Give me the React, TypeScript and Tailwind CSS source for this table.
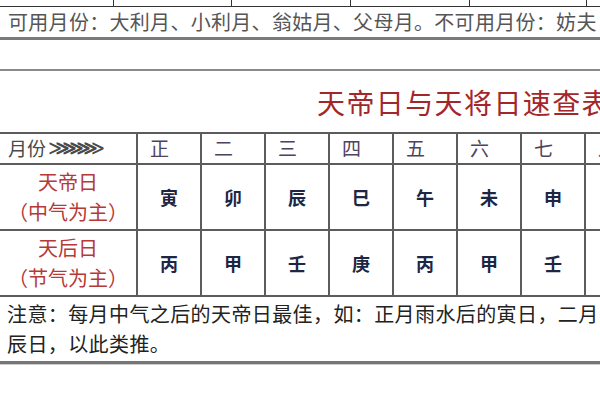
const font = { fontFamily: '"Noto Sans CJK SC", "Noto Sans", sans-serif' };

const months = ['正', '二', '三', '四', '五', '六', '七', '八'];
const tiandi = ['寅', '卯', '辰', '巳', '午', '未', '申', '酉'];
const tianhou = ['丙', '甲', '壬', '庚', '丙', '甲', '壬', '庚'];

function ValueRow({ title, sub, values }: { title: string; sub: string; values: string[] }) {
  return (
    <>
      <div className="h-[66px] flex flex-col items-center justify-center border-r-2 border-b-2 border-[#5c5c5c] text-[20px] leading-[30px] text-[#b53a37]">
        <span>{title}</span>
        <span>（{sub}）</span>
      </div>
      {values.map((v, i) => (
        <div
          key={i}
          className="h-[66px] flex items-center justify-center border-r-2 border-b-2 border-[#5c5c5c] text-[18px] font-bold text-[#1d2642]"
        >
          {v}
        </div>
      ))}
    </>
  );
}

export default function App() {
  return (
    <div className="w-[600px] h-[400px] overflow-hidden bg-white" style={font}>
      {/* cut-off row from the table above */}
      <div className="grid grid-cols-[114px_118px_119px_119px_117px_13px] h-[7px] border-b-[1.5px] border-[#333]">
        {[0, 1, 2, 3, 4, 5].map((i) => (
          <div key={i} className={i < 5 ? 'border-r-[1.5px] border-[#333]' : ''} />
        ))}
      </div>

      <div className="h-[30px] flex items-center pl-[8px] whitespace-nowrap text-[20px] tracking-[0.3px] text-[#555]">
        可用月份：大利月、小利月、翁姑月、父母月。不可用月份：妨夫
      </div>

      <div className="h-[3px] bg-[#7a7a7a]" />
      <div className="h-[29px]" />
      <div className="h-[2px] bg-[#8a8a8a]" />

      <div className="h-[61px] flex items-center pl-[317px] whitespace-nowrap text-[28px] tracking-[1.4px] text-[#a3262b]">
        天帝日与天将日速查表
      </div>

      <div className="border-t-2 border-[#5c5c5c] grid grid-cols-[138px_repeat(8,64px)] w-[650px]">
        <div className="h-[31px] flex items-center pl-[8px] border-r-2 border-b-2 border-[#5c5c5c] text-[19px] text-[#4a4a4a] whitespace-nowrap overflow-hidden">
          月份
          <span className="ml-[2px] text-[21px] tracking-[-15px] font-['DejaVu_Sans',sans-serif]">≫≫≫≫≫≫</span>
        </div>
        {months.map((m) => (
          <div
            key={m}
            className="h-[31px] flex items-center pl-[12px] border-r-2 border-b-2 border-[#5c5c5c] text-[19px] text-[#4e4260]"
          >
            {m}
          </div>
        ))}

        <ValueRow title="天帝日" sub="中气为主" values={tiandi} />
        <ValueRow title="天后日" sub="节气为主" values={tianhou} />
      </div>

      <div className="h-[64px] pt-[2px] pl-[7px] text-[20px] leading-[30px] tracking-[0.4px] text-[#222] overflow-hidden">
        <div className="whitespace-nowrap">注意：每月中气之后的天帝日最佳，如：正月雨水后的寅日，二月</div>
        <div>辰日，以此类推。</div>
      </div>

      <div className="h-[3px] bg-[#777]" />
      <div className="h-[1px] bg-[#ccc]" />
    </div>
  );
}
